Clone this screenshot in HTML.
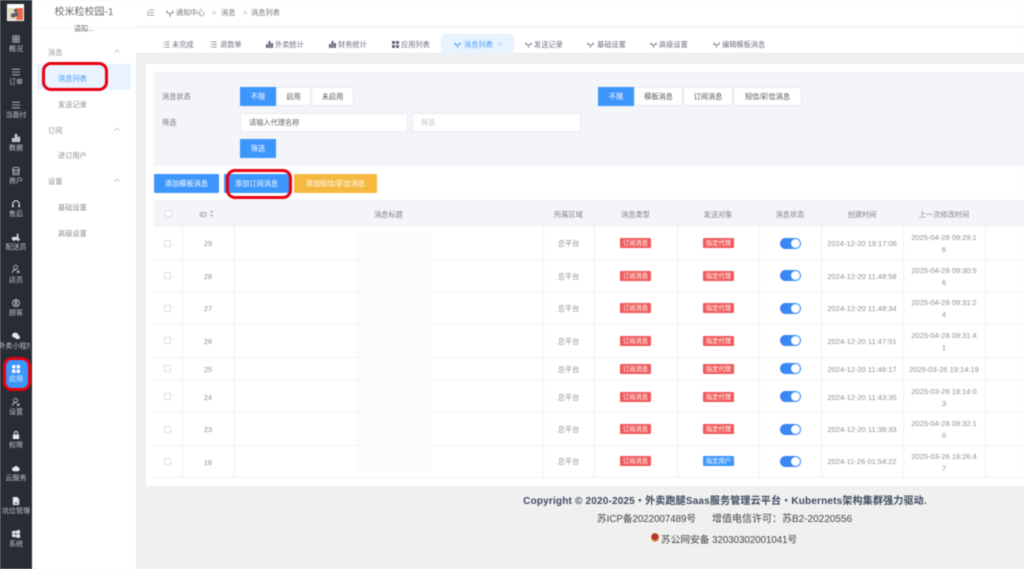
<!DOCTYPE html>
<html lang="zh-CN"><head><meta charset="utf-8"><title>消息列表</title>
<style>
html,body{margin:0;padding:0;width:1024px;height:569px;overflow:hidden;background:#f0f0f0}
#r{position:relative;width:1024px;height:569px;overflow:hidden;filter:blur(.4px);font-family:"Liberation Sans","Noto Sans CJK SC",sans-serif;font-size:7.2px;color:#606266}
#r div,#r svg{position:absolute;box-sizing:border-box}
.c{text-align:center;white-space:nowrap}
.sl{left:0;width:32px;text-align:center;color:#c4c6ca;font-size:7px;line-height:10px;height:10px;white-space:nowrap;overflow:hidden}
.si{left:12px;width:8px;height:8px}
.m{left:58px;color:#8a8c90;line-height:10px;white-space:nowrap}
.g{left:48px;color:#909399;line-height:10px}
.ch{left:114px;width:6px;height:4px}
.t{top:40px;line-height:10px;color:#6a6f7a;white-space:nowrap}
.n{top:8px;line-height:10px;color:#777;white-space:nowrap}
.ti{top:41px;width:7px;height:7px}
.b{background:#fff;border:1px solid #e8ebf2;text-align:center;color:#555;line-height:18px;height:19px;white-space:nowrap}
.on{background:#3d96fb;border-color:#3d96fb;color:#fff}
.btn{top:174px;height:19px;line-height:20px;text-align:center;color:#fff;background:#3d96fb;border-radius:1px;white-space:nowrap}
.th{top:200px;height:27px;line-height:29px;text-align:center;color:#7d8087;white-space:nowrap}
.v{width:1px;background:#eff1f7;top:200px;height:277px}
.h{left:154px;width:870px;height:1px;background:#eff1f7}
.cell{text-align:center;color:#8d8f94;white-space:nowrap;line-height:10px}
.d{font-size:7.5px;left:821px;width:82px}
.e{font-size:7.5px;left:903px;width:82px;line-height:12px}
.id{left:182px;width:52px}
.ar{left:543px;width:51px}
.tag{width:31px;height:10px;line-height:11px;text-align:center;color:#fff;background:#ef5a5a;font-size:6.3px;border-radius:1px;white-space:nowrap}
.sw{left:780px;width:21px;height:11px;border-radius:6px;background:#3a87f5}
.sw i{position:absolute;right:1px;top:1px;width:9px;height:9px;border-radius:50%;background:#fff}
.cb{left:164px;width:7px;height:7px;border:1px solid #dcdfe6;background:#fff;border-radius:1px}
.ring{border:3px solid #e8000f;background:transparent;z-index:5}
</style></head><body><div id="r">

<div style="left:0;top:0;width:32px;height:569px;background:#282c34"></div>
<div style="left:32px;top:0;width:104px;height:569px;background:#fff"></div>
<div style="left:136px;top:0;width:888px;height:27px;background:#fff;border-bottom:1px solid #f2f2f2"></div>
<div style="left:136px;top:28px;width:888px;height:26px;background:#fff;border-bottom:1px solid #e9e9e9"></div>

<!-- logo -->
<div style="left:7px;top:4px;width:17px;height:17px;background:#fff"></div>
<div style="left:8px;top:8px;width:15px;height:12px;background:linear-gradient(90deg,#e6dcc0 0,#e6dcc0 52%,#e9684a 60%,#ea6a4a 100%)"></div>
<div style="left:14px;top:9px;width:3px;height:3px;background:#444c5c;border-radius:50%"></div>
<div style="left:11px;top:13px;width:7px;height:4px;background:#5a6274;transform:rotate(-18deg)"></div>

<!-- sidebar icons -->
<svg class="si" style="top:35px" viewBox="0 0 10 10" fill="none" stroke="#c4c6ca"><rect x="1" y="1" width="3.2" height="3.2"/><rect x="5.8" y="1" width="3.2" height="3.2"/><rect x="1" y="5.8" width="3.2" height="3.2"/><rect x="5.800" y="5.8" width="3.2" height="3.2"/></svg>
<svg class="si" style="top:68px" viewBox="0 0 10 10" stroke="#c4c6ca"><path d="M0 1.500h10M0 5h10M0 8.500h10"/></svg>
<svg class="si" style="top:101px" viewBox="0 0 10 10" stroke="#c4c6ca"><path d="M0 1.500h10M0 5h10M0 8.500h10"/></svg>
<svg class="si" style="top:134px" viewBox="0 0 10 10" fill="#d8dadd"><path d="M0 5h3v5H0zM3.500 0h3v10h-3zM7 3.500h3V10H7z"/></svg>
<svg class="si" style="top:167px" viewBox="0 0 10 10" fill="none" stroke="#d0d2d6"><path d="M2 .5h6l1.500 3.500H.5zM1.500 4v5.500h7V4M1.500 7h7"/></svg>
<svg class="si" style="top:200px" viewBox="0 0 10 10" fill="none" stroke="#e2e3e6" stroke-width="1.300"><path d="M1 7V5a4 4 0 0 1 8 0v2"/><path d="M1 6v3M9 6v3" stroke-width="2"/></svg>
<svg class="si" style="top:233px" viewBox="0 0 10 10" fill="#e2e3e6"><path d="M0 5h6V1h2v6h2v1.500H0z"/><circle cx="2.500" cy="8.500" r="1.500"/><circle cx="7.500" cy="8.500" r="1.500"/></svg>
<svg class="si" style="top:265px" viewBox="0 0 10 10" fill="none" stroke="#d0d2d6"><circle cx="4.500" cy="3" r="2.500"/><path d="M.5 10c0-3 1.500-4 4-4M6 7l3.500 3M9.500 7L6 10"/></svg>
<svg class="si" style="top:299px" viewBox="0 0 10 10" fill="none" stroke="#d0d2d6"><circle cx="5" cy="5" r="4.300"/><circle cx="5" cy="4" r="1.400"/><path d="M2.800 7.800c1-1.400 3.400-1.400 4.400 0"/></svg>
<svg class="si" style="top:332px" viewBox="0 0 10 10" fill="#e6e7e9"><ellipse cx="4" cy="4" rx="4" ry="3.200"/><ellipse cx="7" cy="6.500" rx="3" ry="2.500"/></svg>
<div style="left:5px;top:359px;width:23px;height:30px;background:#3d96fb;border-radius:3px"></div>
<svg class="si" style="top:365px" viewBox="0 0 10 10" fill="#fff"><rect width="4.300" height="4.300" rx="1"/><rect x="5.700" width="4.300" height="4.300" rx="1"/><rect y="5.700" width="4.300" height="4.300" rx="1"/><rect x="5.700" y="5.700" width="4.300" height="4.300" rx="1"/></svg>
<svg class="si" style="top:398px" viewBox="0 0 10 10" fill="none" stroke="#d0d2d6"><circle cx="4.500" cy="3" r="2.500"/><path d="M.5 10c0-3 1.500-4 4-4M6 7l3.500 3M9.500 7L6 10"/></svg>
<svg class="si" style="top:431px" viewBox="0 0 10 10" fill="#e6e7e9"><path d="M1 4.500h8V10H1z"/><path d="M3 4.500V2.500a2 2 0 0 1 4 0v2" fill="none" stroke="#e6e7e9" stroke-width="1.200"/></svg>
<svg class="si" style="top:464px" viewBox="0 0 10 10" fill="#e6e7e9"><path d="M2.500 9a2.300 2.300 0 0 1-.3-4.600A3.200 3.200 0 0 1 8 4.200 2.500 2.500 0 0 1 7.500 9z"/></svg>
<svg class="si" style="top:497px" viewBox="0 0 10 10" fill="#e6e7e9"><path d="M1 0h5.500L9 2.500V10H1z"/><path d="M3 7.500h4" stroke="#282c34"/></svg>
<svg class="si" style="top:530px" viewBox="0 0 10 10" fill="#e6e7e9"><path d="M0 1.500l4.500-.7v3.900H0zM5 .7L10 0v4.700H5zM0 5.300h4.500v3.900L0 8.500zM5 5.300h5V10l-5-.7z"/></svg>

<div class="sl" style="top:45px">概况</div>
<div class="sl" style="top:78px">订单</div>
<div class="sl" style="top:111px">当面付</div>
<div class="sl" style="top:144px">数据</div>
<div class="sl" style="top:177px">商户</div>
<div class="sl" style="top:210px">售后</div>
<div class="sl" style="top:243px">配送员</div>
<div class="sl" style="top:276px">店员</div>
<div class="sl" style="top:309px">顾客</div>
<div class="sl" style="top:342px;left:-3px;width:38px;clip-path:inset(0 5px 0 3px)">外卖小程序</div>
<div class="sl" style="top:375px;color:#e8f1ff">应用</div>
<div class="sl" style="top:408px">设置</div>
<div class="sl" style="top:441px">权限</div>
<div class="sl" style="top:474px">云服务</div>
<div class="sl" style="top:507px">坑位管理</div>
<div class="sl" style="top:540px">系统</div>
<div class="ring" style="left:3px;top:357px;width:28px;height:34px;border-radius:9px"></div>

<!-- secondary menu -->
<div class="c" style="left:32px;width:104px;top:6px;font-size:10px;line-height:14px;color:#6a6a6a">校米粒校园-1</div>
<div class="c" style="left:32px;width:104px;top:24px;line-height:10px;color:#555">通知...</div>
<div style="left:32px;top:27px;width:104px;height:1px;background:#f5f5f5"></div>
<div class="g" style="top:48px">消息</div>
<svg class="ch" style="top:49px" viewBox="0 0 6 4" fill="none" stroke="#b0b3b8" stroke-width=".7"><path d="M.5 3.500L3 1l2.500 2.500"/></svg>
<div style="left:37px;top:64px;width:94px;height:26px;background:#e8f3ff;border-radius:2px"></div>
<div class="m" style="top:74px;color:#4a9bf8">消息列表</div>
<div class="m" style="top:100px">发送记录</div>
<div class="g" style="top:126px">订阅</div>
<svg class="ch" style="top:127px" viewBox="0 0 6 4" fill="none" stroke="#b0b3b8" stroke-width=".7"><path d="M.5 3.500L3 1l2.500 2.500"/></svg>
<div class="m" style="top:151px">进订用户</div>
<div class="g" style="top:177px">设置</div>
<svg class="ch" style="top:178px" viewBox="0 0 6 4" fill="none" stroke="#b0b3b8" stroke-width=".7"><path d="M.5 3.500L3 1l2.500 2.500"/></svg>
<div class="m" style="top:203px">基础设置</div>
<div class="m" style="top:229px">高级设置</div>
<div class="ring" style="left:42px;top:62px;width:66px;height:29px;border-radius:9px"></div>

<!-- top bar -->
<svg style="left:147px;top:9px;width:7px;height:7px" viewBox="0 0 8 8" stroke="#888" fill="none" stroke-width=".8"><path d="M3 1h5M3 4h5M0 7h8M2 2.500L.5 4 2 5.500"/></svg>
<svg style="left:166px;top:9px;width:8px;height:8px" viewBox="0 0 8 8" stroke="#8a8f9a" fill="none"><path d="M1 1.500v3M7 1.500v3M4 4v4M1 3l3 2 3-2"/></svg>
<div class="n" style="left:176px">通知中心</div>
<div class="n" style="left:212px;color:#aaa">&gt;</div>
<div class="n" style="left:221px">消息</div>
<div class="n" style="left:243px;color:#aaa">&gt;</div>
<div class="n" style="left:251px">消息列表</div>

<!-- tabs -->
<div style="left:441px;top:34px;width:73px;height:20px;background:#e8f3ff;border-radius:4px 4px 0 0"></div>
<svg class="ti" style="left:163px" viewBox="0 0 7 8" stroke="#6a6f7a" stroke-width=".8"><path d="M0 1h1M2 1h5M0 4h1M2 4h5M0 7h1M2 7h5"/></svg>
<div class="t" style="left:172px">未完成</div>
<svg class="ti" style="left:210px" viewBox="0 0 7 8" stroke="#6a6f7a" stroke-width=".8"><path d="M0 1h1M2 1h5M0 4h1M2 4h5M0 7h1M2 7h5"/></svg>
<div class="t" style="left:220px">退款单</div>
<svg class="ti" style="left:266px" viewBox="0 0 7 7" fill="#5f6470"><path d="M0 3h2v4H0zM2.500 0h2v7h-2zM5 2h2v5H5z"/></svg>
<div class="t" style="left:275px">外卖统计</div>
<svg class="ti" style="left:329px" viewBox="0 0 7 7" fill="#5f6470"><path d="M0 3h2v4H0zM2.500 0h2v7h-2zM5 2h2v5H5z"/></svg>
<div class="t" style="left:338px">财务统计</div>
<svg class="ti" style="left:392px" viewBox="0 0 7 7" fill="#5f6470"><rect width="3" height="3" rx=".6"/><rect x="4" width="3" height="3" rx=".6"/><rect y="4" width="3" height="3" rx=".6"/><rect x="4" y="4" width="3" height="3" rx=".6"/></svg>
<div class="t" style="left:401px">应用列表</div>
<svg class="ti" style="left:454px" viewBox="0 0 8 8" stroke="#4a9bf8" fill="none"><path d="M1 1.500v3M7 1.500v3M4 4v4M1 3l3 2 3-2"/></svg>
<div class="t" style="left:464px;color:#4a9bf8">消息列表</div>
<div class="t" style="left:498px;color:#7fb5f5;font-size:6px">×</div>
<svg class="ti" style="left:525px" viewBox="0 0 8 8" stroke="#7a7f8a" fill="none"><path d="M1 1.500v3M7 1.500v3M4 4v4M1 3l3 2 3-2"/></svg>
<div class="t" style="left:534px">发送记录</div>
<svg class="ti" style="left:587px" viewBox="0 0 8 8" stroke="#7a7f8a" fill="none"><path d="M1 1.500v3M7 1.500v3M4 4v4M1 3l3 2 3-2"/></svg>
<div class="t" style="left:597px">基础设置</div>
<svg class="ti" style="left:650px" viewBox="0 0 8 8" stroke="#7a7f8a" fill="none"><path d="M1 1.500v3M7 1.500v3M4 4v4M1 3l3 2 3-2"/></svg>
<div class="t" style="left:659px">高级设置</div>
<svg class="ti" style="left:713px" viewBox="0 0 8 8" stroke="#7a7f8a" fill="none"><path d="M1 1.500v3M7 1.500v3M4 4v4M1 3l3 2 3-2"/></svg>
<div class="t" style="left:722px">编辑模板消息</div>

<!-- card -->
<div style="left:146px;top:64px;width:878px;height:422px;background:#fff"></div>
<div style="left:154px;top:72px;width:870px;height:94px;background:#f4f5f9"></div>
<div style="left:162px;top:92px;line-height:10px;color:#777">消息状态</div>
<div style="left:162px;top:118px;line-height:10px;color:#777">筛选</div>
<div class="b on" style="left:240px;top:87px;width:36px">不限</div>
<div class="b" style="left:276px;top:87px;width:35px">启用</div>
<div class="b" style="left:311px;top:87px;width:43px">未启用</div>
<div class="b on" style="left:598px;top:87px;width:36px">不限</div>
<div class="b" style="left:634px;top:87px;width:49px">模板消息</div>
<div class="b" style="left:683px;top:87px;width:50px">订阅消息</div>
<div class="b" style="left:733px;top:87px;width:69px">短信/彩信消息</div>
<div style="left:240px;top:113px;width:168px;height:19px;background:#fff;border:1px solid #e8ebf2;padding-left:8px;line-height:18px;color:#666">请输入代理名称</div>
<div style="left:412px;top:113px;width:169px;height:19px;background:#fff;border:1px solid #e8ebf2;padding-left:8px;line-height:18px;color:#c4c6cc">筛选</div>
<div class="b on" style="left:240px;top:139px;width:36px">筛选</div>

<div class="btn" style="left:154px;width:65px">添加模板消息</div>
<div class="btn" style="left:224px;width:65px">添加订阅消息</div>
<div class="btn" style="left:294px;width:83px;background:#f5b940">添加短信/彩信消息</div>
<div class="ring" style="left:226px;top:169px;width:66px;height:30px;border-radius:9px"></div>

<!-- table -->
<div style="left:154px;top:200px;width:870px;height:27px;background:#f4f5f9"></div>
<div class="cb" style="top:210px;left:165px"></div>
<div class="th" style="left:199px;width:8px;font-size:7.5px">ID</div>
<svg style="left:209px;top:210px;width:5px;height:7px" viewBox="0 0 5 7" fill="#b4b7bd"><path d="M2.500 0l2 2.500H.500zM2.500 7l2-2.500H.500z"/></svg>
<div class="th" style="left:234px;width:309px">消息标题</div>
<div class="th" style="left:543px;width:51px">所属区域</div>
<div class="th" style="left:594px;width:83px">消息类型</div>
<div class="th" style="left:677px;width:82px">发送对象</div>
<div class="th" style="left:759px;width:62px">消息状态</div>
<div class="th" style="left:821px;width:82px">创建时间</div>
<div class="th" style="left:903px;width:82px">上一次修改时间</div>

<div class="v" style="left:182px"></div><div class="v" style="left:234px"></div><div class="v" style="left:543px"></div><div class="v" style="left:594px"></div><div class="v" style="left:677px"></div><div class="v" style="left:759px"></div><div class="v" style="left:821px"></div><div class="v" style="left:903px"></div><div class="v" style="left:985px"></div>
<div class="h" style="top:259px"></div><div class="h" style="top:292px"></div><div class="h" style="top:324px"></div><div class="h" style="top:357px"></div><div class="h" style="top:380px"></div><div class="h" style="top:412px"></div><div class="h" style="top:445px"></div><div class="h" style="top:477px"></div>

<!-- rows -->
<div class="cb" style="top:240px"></div><div class="cell id" style="top:239px">29</div><div class="cell ar" style="top:239px">总平台</div><div class="tag" style="left:620px;top:238px">订阅消息</div><div class="tag" style="left:703px;top:238px">指定代理</div><div class="sw" style="top:238px"><i></i></div><div class="cell d" style="top:239px">2024-12-20 19:17:06</div><div class="cell e" style="top:232px">2025-04-28 09:29:1<br>6</div>
<div class="cb" style="top:272px"></div><div class="cell id" style="top:272px">28</div><div class="cell ar" style="top:272px">总平台</div><div class="tag" style="left:620px;top:271px">订阅消息</div><div class="tag" style="left:703px;top:271px">指定代理</div><div class="sw" style="top:270px"><i></i></div><div class="cell d" style="top:272px">2024-12-20 11:48:58</div><div class="cell e" style="top:265px">2025-04-28 09:30:5<br>6</div>
<div class="cb" style="top:305px"></div><div class="cell id" style="top:304px">27</div><div class="cell ar" style="top:304px">总平台</div><div class="tag" style="left:620px;top:303px">订阅消息</div><div class="tag" style="left:703px;top:303px">指定代理</div><div class="sw" style="top:303px"><i></i></div><div class="cell d" style="top:304px">2024-12-20 11:48:34</div><div class="cell e" style="top:297px">2025-04-28 09:31:2<br>4</div>
<div class="cb" style="top:337px"></div><div class="cell id" style="top:337px">26</div><div class="cell ar" style="top:337px">总平台</div><div class="tag" style="left:620px;top:336px">订阅消息</div><div class="tag" style="left:703px;top:336px">指定代理</div><div class="sw" style="top:335px"><i></i></div><div class="cell d" style="top:337px">2024-12-20 11:47:51</div><div class="cell e" style="top:330px">2025-04-28 09:31:4<br>1</div>
<div class="cb" style="top:365px"></div><div class="cell id" style="top:365px">25</div><div class="cell ar" style="top:365px">总平台</div><div class="tag" style="left:620px;top:364px">订阅消息</div><div class="tag" style="left:703px;top:364px">指定代理</div><div class="sw" style="top:363px"><i></i></div><div class="cell d" style="top:365px">2024-12-20 11:46:17</div><div class="cell e" style="top:364px">2025-03-26 19:14:19</div>
<div class="cb" style="top:393px"></div><div class="cell id" style="top:393px">24</div><div class="cell ar" style="top:393px">总平台</div><div class="tag" style="left:620px;top:392px">订阅消息</div><div class="tag" style="left:703px;top:392px">指定代理</div><div class="sw" style="top:391px"><i></i></div><div class="cell d" style="top:393px">2024-12-20 11:43:35</div><div class="cell e" style="top:386px">2025-03-26 19:14:0<br>3</div>
<div class="cb" style="top:426px"></div><div class="cell id" style="top:425px">23</div><div class="cell ar" style="top:425px">总平台</div><div class="tag" style="left:620px;top:424px">订阅消息</div><div class="tag" style="left:703px;top:424px">指定代理</div><div class="sw" style="top:424px"><i></i></div><div class="cell d" style="top:425px">2024-12-20 11:38:33</div><div class="cell e" style="top:418px">2025-04-28 09:32:1<br>0</div>
<div class="cb" style="top:458px"></div><div class="cell id" style="top:458px">16</div><div class="cell ar" style="top:457px">总平台</div><div class="tag" style="left:620px;top:456px">订阅消息</div><div class="tag" style="left:703px;top:456px;background:#3d96fb">指定用户</div><div class="sw" style="top:456px"><i></i></div><div class="cell d" style="top:457px">2024-11-26 01:54:22</div><div class="cell e" style="top:451px">2025-03-26 19:26:4<br>7</div>

<!-- privacy blur -->
<div style="left:357px;top:232px;width:74px;height:240px;background:#fbfbfb;filter:blur(1.500px)"></div>

<!-- footer -->
<div class="c" style="left:422px;width:606px;top:495px;font-size:10px;line-height:14px;font-weight:bold;color:#3d4a5f;letter-spacing:.18px">Copyright © 2020-2025・外卖跑腿Saas服务管理云平台・Kubernets架构集群强力驱动.</div>
<div class="c" style="left:597px;top:513px;font-size:9.700px;line-height:14px;color:#444">苏ICP备2022007489号</div>
<div class="c" style="left:712px;top:513px;font-size:10px;line-height:14px;color:#444">增值电信许可：苏B2-20220556</div>
<div style="left:651px;top:533px;width:8px;height:9px;border-radius:50%;background:radial-gradient(circle at 50% 40%,#b5352c 0,#b5352c 40%,#e7b34c 75%)"></div>
<div class="c" style="left:661px;top:534px;font-size:9.700px;line-height:14px;color:#444">苏公网安备 32030302001041号</div>
</div></body></html>
